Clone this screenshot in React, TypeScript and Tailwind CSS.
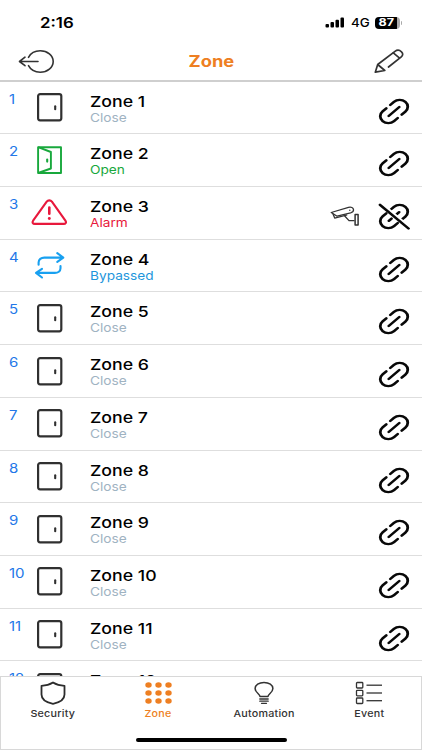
import type { ReactNode } from 'react';

type ZoneStatus = 'Close' | 'Open' | 'Alarm' | 'Bypassed';

interface Zone {
  id: number;
  status: ZoneStatus;
  linked: boolean;
  camera?: boolean;
}

const ZONES: Zone[] = [
  { id: 1, status: 'Close', linked: true },
  { id: 2, status: 'Open', linked: true },
  { id: 3, status: 'Alarm', linked: false, camera: true },
  { id: 4, status: 'Bypassed', linked: true },
  { id: 5, status: 'Close', linked: true },
  { id: 6, status: 'Close', linked: true },
  { id: 7, status: 'Close', linked: true },
  { id: 8, status: 'Close', linked: true },
  { id: 9, status: 'Close', linked: true },
  { id: 10, status: 'Close', linked: true },
  { id: 11, status: 'Close', linked: true },
  { id: 12, status: 'Close', linked: true },
];

const STATUS_COLOR: Record<ZoneStatus, string> = {
  Close: 'text-[#9fb3c2]',
  Open: 'text-[#18a83c]',
  Alarm: 'text-[#e8183c]',
  Bypassed: 'text-[#1e96dc]',
};

function ExitIcon() {
  return (
    <svg width="38" height="26" viewBox="0 0 38 26" fill="none" stroke="#333" strokeWidth="1.600" strokeLinecap="round" strokeLinejoin="round">
      <path d="M10.500 8.300C12.500 4.500 16.800 1.800 22.200 1.800c7.200 0 13 4.800 13 10.700s-5.800 10.700-13 10.700c-5.400 0-9.700-2.700-11.700-6.500" />
      <path d="M20 12.500H1.500M7 8.200l-5.500 4.300L7 16.700" />
    </svg>
  );
}

function PencilIcon() {
  return (
    <svg width="30" height="25" viewBox="0 0 30 25" fill="none" stroke="#333" strokeWidth="1.700" strokeLinecap="round" strokeLinejoin="round">
      <path d="M14.500 18 27.300 7.800c1.800-1.500 1.900-3.400.2-5-1.800-1.700-4.600-1.900-6.500-.4L3.700 15.500 1.300 23.200l9.500-1.700-7.100-6" />
      <path d="M19.300 3.900l6 5" />
    </svg>
  );
}

function DoorIcon() {
  return (
    <svg width="36" height="30" viewBox="0 0 36 30" fill="none" stroke="#303030" strokeWidth="2.200">
      <rect x="7.100" y="2.100" width="23.200" height="26.200" rx="2" />
      <path d="M24.200 14.200v3" strokeWidth="2.100" strokeLinecap="round" />
    </svg>
  );
}

function OpenDoorIcon() {
  return (
    <svg width="36" height="30" viewBox="0 0 36 30" fill="none" stroke="#18a83c" strokeWidth="1.900" strokeLinejoin="round">
      <path d="M7.100 2.200H30v25.800H7.100z" />
      <path d="M7.100 2.200 19.900 7v16.500L7.100 28" />
      <path d="M16.200 14.600v2" strokeWidth="2.100" strokeLinecap="round" />
    </svg>
  );
}

function AlarmIcon() {
  return (
    <svg width="36" height="30" viewBox="0 0 36 30" fill="none" stroke="#e8183c" strokeWidth="2.100" strokeLinejoin="round" strokeLinecap="round">
      <path d="M15.700 4.600 2.100 23.700c-1.100 1.700-.3 3.200 1.700 3.200h28.900c2 0 2.900-1.500 1.700-3.200L20.900 4.600c-1.300-1.700-3.900-1.700-5.200 0z" />
      <path d="M18.300 10.500v6.300" strokeWidth="2.600" />
      <path d="M18.300 21.400v.1" strokeWidth="2.900" />
    </svg>
  );
}

function BypassIcon() {
  return (
    <svg width="36" height="30" viewBox="0 0 36 30" fill="none" stroke="#18a0f0" strokeWidth="2.100" strokeLinecap="round" strokeLinejoin="round">
      <path d="M7.600 14.700v-2.200c0-3 2.500-4.900 5.700-4.900h18.200M26.300 3.200l6 4.400-6 4.200" />
      <path d="M29.500 16v2.200c0 3-2.500 4.700-5.700 4.700H5.200M11 18.800l-6 4.100 6 4.600" />
    </svg>
  );
}

function ZoneIcon({ status }: { status: ZoneStatus }) {
  if (status === 'Open') return <OpenDoorIcon />;
  if (status === 'Alarm') return <AlarmIcon />;
  if (status === 'Bypassed') return <BypassIcon />;
  return <DoorIcon />;
}

function LinkIcon({ linked }: { linked: boolean }) {
  return (
    <svg width="32" height="27" viewBox="0 0 32 32" preserveAspectRatio="none" fill="none" stroke="#080808" strokeWidth="2.800" strokeLinecap="round">
      <g transform="rotate(-45 16 16)">
        <path d="M18.800 7.900H24a8.100 8.100 0 0 1 0 16.200h-5.200" />
        <path d="M13.200 7.900H8a8.100 8.100 0 0 0 0 16.200h5.200" />
        {linked ? <path d="M8.500 16h15" /> : <path d="M8.700 16h3.800M19.500 16h3.800" />}
      </g>
      {!linked && (
        <>
          <path d="M4.500 1 33 29.500" stroke="#fff" strokeWidth="2" />
          <path d="M2 2.200 30.500 30.200" strokeWidth="2.800" />
        </>
      )}
    </svg>
  );
}

function CameraIcon() {
  return (
    <svg width="30" height="21" viewBox="0 0 30 21" fill="none" stroke="#333" strokeWidth="1.300" strokeLinejoin="round">
      <path d="M1.200 6.500 18.500 1.400c2.600-.7 4.800.3 5 2.200.2 1.500-.9 2.700-2.900 3.300L7.100 10.200z" />
      <path d="M2.900 7.800l1.800 4.300 12.500-3.300" />
      <path d="M14.500 9.700l4.500 4.900h5.500" />
      <path d="M25.100 8.500h3v10.500h-3z" strokeWidth="1.500" />
      <circle cx="19.800" cy="4.200" r=".7" fill="#333" stroke="none" />
    </svg>
  );
}

function ShieldIcon() {
  return (
    <svg width="28" height="24" viewBox="0 0 28 24" fill="none" stroke="#2c2c2c" strokeWidth="1.800" strokeLinejoin="round">
      <path d="M14 1.500c-3.500 2.200-7.300 3.100-11.500 3.300v8.700c0 5.300 5 8 11.500 9.300 6.500-1.300 11.500-4 11.500-9.300V4.800C21.300 4.600 17.500 3.700 14 1.500z" />
    </svg>
  );
}

function GridIcon() {
  return (
    <svg width="28" height="24" viewBox="0 0 28 24" fill="#ee7f22">
      {[4.500, 14.500, 24.500].map((x) =>
        [4, 12, 20].map((y) => <ellipse key={`${x}-${y}`} cx={x} cy={y} rx="3.200" ry="2.800" />)
      )}
    </svg>
  );
}

function BulbIcon() {
  return (
    <svg width="28" height="24" viewBox="0 0 28 24" fill="none" stroke="#333" strokeWidth="1.500" strokeLinecap="round">
      <path d="M10 15.500c0-2.600-4.900-3.700-4.900-7.900 0-3.600 3.900-6.100 8.900-6.100s8.900 2.500 8.900 6.100c0 4.200-4.900 5.300-4.900 7.900z" strokeLinejoin="round" />
      <path d="M9.800 18h8.400M9.800 20.200h8.400M11.500 22.300h5" strokeWidth="1.300" />
    </svg>
  );
}

function ListIcon() {
  return (
    <svg width="28" height="24" viewBox="0 0 28 24" fill="none" stroke="#333" strokeWidth="1.300">
      {[1.500, 9.300, 17].map((y) => (
        <g key={y}>
          <rect x="1.500" y={y} width="6.300" height="5.500" rx=".8" />
          <path d={`M11.500 ${y + 2.700}H27`} />
        </g>
      ))}
    </svg>
  );
}

function StatusBar() {
  return (
    <div className="flex h-11 items-center justify-between pt-px pr-5 pl-10">
      <span className="origin-left scale-x-[1.160] text-[14.500px] font-semibold">2:16</span>
      <div className="flex items-center gap-1.5">
        <svg width="20" height="11" viewBox="0 0 20 11">
          <rect x="0.500" y="7" width="3.500" height="3.500" rx="1" />
          <rect x="5.500" y="5" width="3.500" height="5.500" rx="1" />
          <rect x="10.500" y="2.800" width="3.500" height="7.700" rx="1" />
          <rect x="15.500" y="0.500" width="3.500" height="10" rx="1" />
        </svg>
        <span className="w-[18px] origin-left scale-x-[1.160] pt-0.5 text-[11.500px] font-medium">4G</span>
        <div className="flex items-center gap-px">
          <div className="flex h-[12px] w-[25px] items-center justify-center rounded-[4px] bg-linear-to-r from-black from-88% to-[#aaa] to-88%">
            <span className="scale-x-[1.200] pr-0.5 text-[10.500px] leading-[12px] font-bold text-white">87</span>
          </div>
          <div className="h-1 w-px rounded-r bg-[#aaa]" />
        </div>
      </div>
    </div>
  );
}

function ZoneRow({ zone }: { zone: Zone }) {
  return (
    <li className="flex h-[52.720px] shrink-0 border-b border-[#dedede] pr-3 pl-[9px]">
      <div className="w-[22px] pt-[9px] text-[12.500px] leading-[18px] text-[#2377e8]">
        <span className="inline-block origin-left scale-x-[1.200]">{zone.id}</span>
      </div>
      <div className="w-[59px] pt-[10.500px]">
        <ZoneIcon status={zone.status} />
      </div>
      <div className="flex flex-1 flex-col items-start pt-[11px]">
        <span className="origin-left scale-x-[1.180] text-[15px] leading-[18px] font-medium text-black">Zone {zone.id}</span>
        <span className={`origin-left scale-x-[1.140] text-[12px] leading-[13px] ${STATUS_COLOR[zone.status]}`}>{zone.status}</span>
      </div>
      <div className="flex items-start gap-[18px] pt-[16px]">
        {zone.camera && (
          <div className="pt-[3px]">
            <CameraIcon />
          </div>
        )}
        <LinkIcon linked={zone.linked} />
      </div>
    </li>
  );
}

function Tab({ icon, label, active }: { icon: ReactNode; label: string; active?: boolean }) {
  return (
    <button className={`flex flex-1 flex-col items-center pt-1 ${active ? 'text-[#ee7f22]' : 'text-[#333]'}`}>
      {icon}
      <span className="mt-[3px] scale-x-[1.130] text-[9.500px] leading-[12px] font-medium tracking-[0.200px]">{label}</span>
    </button>
  );
}

export default function App() {
  return (
    <div className="flex h-[750px] w-[422px] flex-col overflow-hidden bg-white font-['Inter',sans-serif]">
      <StatusBar />
      <header className="flex h-[37.500px] shrink-0 items-center justify-between border-b-2 border-[#cfcfcf] pr-[18px] pl-[18px]">
        <button aria-label="Log out" className="w-[38px]">
          <ExitIcon />
        </button>
        <h1 className="scale-x-[1.180] text-[15.500px] font-bold text-[#ee7f22]">Zone</h1>
        <button aria-label="Edit" className="flex w-[38px] justify-end">
          <PencilIcon />
        </button>
      </header>
      <ul className="flex min-h-0 flex-1 flex-col overflow-hidden">
        {ZONES.map((zone) => (
          <ZoneRow key={zone.id} zone={zone} />
        ))}
      </ul>
      <nav className="flex h-[74px] shrink-0 flex-col border border-[#d8d8d8] bg-white">
        <div className="-mr-px -ml-px flex">
          <Tab icon={<ShieldIcon />} label="Security" />
          <Tab icon={<GridIcon />} label="Zone" active />
          <Tab icon={<BulbIcon />} label="Automation" />
          <Tab icon={<ListIcon />} label="Event" />
        </div>
        <div className="mx-auto mt-auto mb-[7px] h-1 w-[151px] rounded-full bg-black" />
      </nav>
    </div>
  );
}
